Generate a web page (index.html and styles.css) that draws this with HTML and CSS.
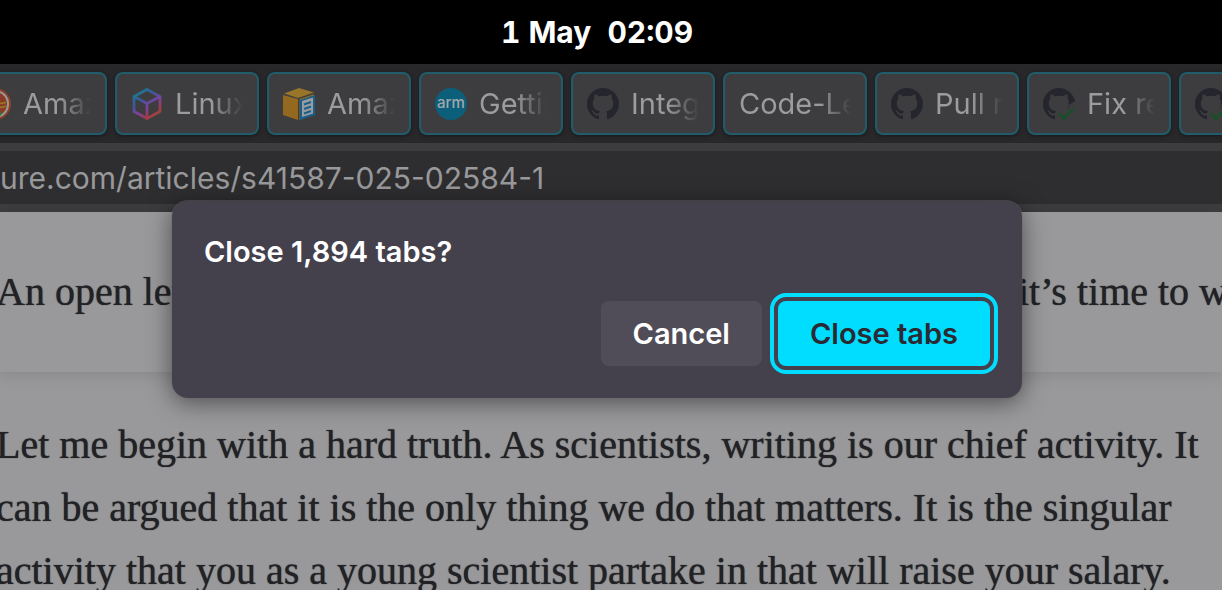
FILE: index.html
```
<!DOCTYPE html>
<html lang="en">
	<head>
		<meta charset="UTF-8">
		<meta name="viewport" content="width=device-width, initial-scale=1.0">
		<title>Close tabs</title>
		<link rel="stylesheet" href="styles.css">
	</head>
	<body>
		<!-- shared icons -->
		<svg class="defs" width="0" height="0" aria-hidden="true">
			<symbol id="github" viewBox="0 0 16 16">
				<path fill="#25262d" d="M8 0C3.58 0 0 3.58 0 8c0 3.54 2.29 6.53 5.47 7.59.4.07.55-.17.55-.38 0-.19-.01-.82-.01-1.49-2.01.37-2.53-.49-2.69-.94-.09-.23-.48-.94-.82-1.13-.28-.15-.68-.52-.01-.53.63-.01 1.08.58 1.23.82.72 1.21 1.87.87 2.33.66.07-.52.28-.87.51-1.07-1.78-.2-3.64-.89-3.64-3.95 0-.87.31-1.59.82-2.15-.08-.2-.36-1.02.08-2.12 0 0 .67-.21 2.2.82.64-.18 1.32-.27 2-.27s1.36.09 2 .27c1.53-1.04 2.2-.82 2.2-.82.44 1.1.16 1.92.08 2.12.51.56.82 1.27.82 2.15 0 3.07-1.87 3.75-3.65 3.95.29.25.54.73.54 1.48 0 1.07-.01 1.93-.01 2.2 0 .21.15.46.55.38A8.01 8.01 0 0 0 16 8c0-4.42-3.58-8-8-8z"/>
			</symbol>
			<symbol id="github-ok" viewBox="0 0 32 32">
				<use href="#github" width="32" height="32"/>
				<path fill="#3d3d3f" d="M33 12L27 16 26 20 21 22 14 22 12 33H33Z"/>
				<path fill="#25262d" d="M25 15L31 10 32 13 27 16Z"/>
				<path fill="none" stroke="#145226" stroke-width="2.4" d="M16 25.500L21 30.500 30.500 20.500"/>
			</symbol>
		</svg>

		<header class="clock"><time>1 May&nbsp; 02:09</time></header>

		<nav class="tabs">
			<a class="tab" href="#">
				<svg class="icon" viewBox="0 0 32 32">
					<circle cx="16" cy="16" r="16" fill="#8b4029"/>
					<circle cx="16" cy="16" r="13" fill="#8b3a25" stroke="#99999b" stroke-width="2"/>
					<path d="M21 15q3 1 6-1M20 19q3 1 7-1" fill="none" stroke="#9a7a22" stroke-width="1.600"/>
					<path d="M17 27l4-4 2 3-2 2z" fill="#257b35"/>
				</svg>
				<span class="label">Amazon</span>
			</a>
			<a class="tab" href="#">
				<svg class="icon" viewBox="0 0 32 32">
					<defs>
						<linearGradient id="cube" x1="0.200" y1="0" x2="0.800" y2="1">
							<stop offset="0" stop-color="#167f8d"/>
							<stop offset="0.300" stop-color="#3d569c"/>
							<stop offset="0.600" stop-color="#80419c"/>
							<stop offset="0.800" stop-color="#9c3a55"/>
							<stop offset="1" stop-color="#a3482b"/>
						</linearGradient>
					</defs>
					<path d="M16 1.500L29 8.500V23.500L16 30.500 3 23.500V8.500ZM3 8.500L16 15.500 29 8.500M16 15.500V30.500" fill="none" stroke="url(#cube)" stroke-width="2.800"/>
				</svg>
				<span class="label">Linux</span>
			</a>
			<a class="tab" href="#">
				<svg class="icon" viewBox="0 0 32 32">
					<path d="M1 5.500L16 0 31 4.500 15 10Z" fill="#99752a"/>
					<path d="M0 7L15 11V32L0 27Z" fill="#92691f"/>
					<path d="M16.500 11L31 6V26L16.500 32Z" fill="#92691f"/>
					<path d="M17 12L32 7V27L17 32Z" fill="#195f8c"/>
					<path d="M19 13L30 9.500V25.500L19 29Z" fill="#9a9c9f"/>
					<path d="M21 16.500L28 14M21 21L28 18.500M21 25.500L28 23" stroke="#195f8c" stroke-width="2"/>
				</svg>
				<span class="label">Amazon</span>
			</a>
			<a class="tab" href="#">
				<svg class="icon" viewBox="0 0 32 32">
					<circle cx="16" cy="16" r="16" fill="#0c5f7b"/>
					<text class="arm" x="16" y="20" text-anchor="middle">arm</text>
				</svg>
				<span class="label">Getting</span>
			</a>
			<a class="tab" href="#">
				<svg class="icon"><use href="#github"/></svg>
				<span class="label">Integrate</span>
			</a>
			<a class="tab" href="#">
				<span class="label">Code-Level</span>
			</a>
			<a class="tab" href="#">
				<svg class="icon"><use href="#github"/></svg>
				<span class="label">Pull requests</span>
			</a>
			<a class="tab" href="#">
				<svg class="icon"><use href="#github-ok"/></svg>
				<span class="label">Fix release</span>
			</a>
			<a class="tab" href="#" aria-label="GitHub">
				<svg class="icon"><use href="#github-ok"/></svg>
			</a>
		</nav>

		<div class="toolbar">
			<input class="url" type="text" aria-label="Address" value="ure.com/articles/s41587-025-02584-1">
		</div>

		<main class="page">
			<h1 class="headline">
				<span class="start">An open let</span>
				<span class="end">it’s time to w</span>
			</h1>
			<p class="story">Let me begin with a hard truth. As scientists, writing is our chief activity. It<br>
				can be argued that it is the only thing we do that matters. It is the singular<br>
				activity that you as a young scientist partake in that will raise your salary.</p>
		</main>

		<div class="overlay">
			<div class="dialog" role="dialog" aria-labelledby="question">
				<h2 class="question" id="question">Close 1,894 tabs?</h2>
				<div class="buttons">
					<button class="btn" type="button">Cancel</button>
					<button class="btn primary" type="button">Close tabs</button>
				</div>
			</div>
		</div>
	</body>
</html>
```
FILE: styles.css
```
* {
	box-sizing: border-box;
	margin: 0;
	padding: 0;
}

body {
	height: 100vh;
	display: flex;
	flex-direction: column;
	overflow: hidden;
	background-color: #99999b;
	font-family: Inter, "Liberation Sans", sans-serif;
	font-size: 29px;
}

.defs {
	position: absolute;
}

.clock {
	flex: none;
	background-color: #000;
	color: #fff;
	font-size: 30px;
	font-weight: 700;
	font-variant-numeric: tabular-nums;
	line-height: 64px;
	padding-right: 28px;
	text-align: center;
}

/* the strip is scrolled, so the first tab is cut on the left */
.tabs {
	flex: none;
	display: flex;
	gap: 8px;
	padding: 8px 0;
	overflow: hidden;
	background-color: #28282b;
}

.tab {
	flex: none;
	display: flex;
	align-items: center;
	gap: 12px;
	width: 144px;
	height: 63px;
	padding: 0 14px;
	border: 2px solid #205c6b;
	border-radius: 8px;
	background-color: #3d3d3f;
	box-shadow: 0 1px 4px rgba(0, 0, 0, 0.4);
	color: #9c9c9e;
	text-decoration: none;
}

.tab:first-child {
	margin-left: -37px;
}

.icon {
	flex: none;
	width: 32px;
	height: 32px;
}

.arm {
	fill: #a3a8ab;
	font-size: 15px;
	font-weight: 500;
}

.label {
	flex: 1;
	overflow: hidden;
	white-space: nowrap;
	-webkit-mask-image: linear-gradient(to left, transparent, #000 32px);
	mask-image: linear-gradient(to left, transparent, #000 32px);
}

.toolbar {
	flex: none;
	padding: 8px 0;
	background-color: #3d3d3f;
}

.url {
	display: block;
	width: 100%;
	height: 53px;
	border: none;
	outline: none;
	background-color: #2e2e30;
	color: #99999b;
	font: inherit;
	font-size: 30px;
}

.page {
	flex: 1;
	margin-left: -4px;
	color: #222226;
	font-family: "Liberation Serif", serif;
	font-size: 40px;
	text-shadow: 0 0 1px #222226;
	white-space: nowrap;
}

.headline {
	display: flex;
	padding: 48px 0;
	box-shadow: 0 2px 16px rgba(0, 0, 0, 0.12);
	font-size: 40px;
	font-weight: 400;
	line-height: 64px;
}

.start {
	flex: 1;
}

.end {
	flex: 0 0 204px;
	min-width: 0;
	overflow: hidden;
}

.story {
	padding-top: 41px;
	line-height: 63px;
}

.overlay {
	position: absolute;
	top: 201px;
	left: 0;
	right: 0;
	display: flex;
	justify-content: center;
	padding-right: 28px;
}

.dialog {
	width: 850px;
	padding: 32px;
	border-radius: 16px;
	background-color: #44414d;
	box-shadow: 0 0 0 1px rgba(110, 110, 116, 0.4), 0 4px 24px rgba(0, 0, 0, 0.5);
	color: #fff;
}

.question {
	font-size: 29px;
	font-weight: 600;
	line-height: 38px;
}

.buttons {
	display: flex;
	justify-content: flex-end;
	gap: 16px;
	margin-top: 30px;
}

.btn {
	height: 65px;
	padding: 0 32px;
	border: none;
	border-radius: 8px;
	background-color: #504d59;
	color: #fff;
	font: inherit;
	font-weight: 600;
}

.primary {
	background-color: #00ddff;
	color: #2b2a33;
	outline: 4px solid #00ddff;
	outline-offset: 4px;
}
```
